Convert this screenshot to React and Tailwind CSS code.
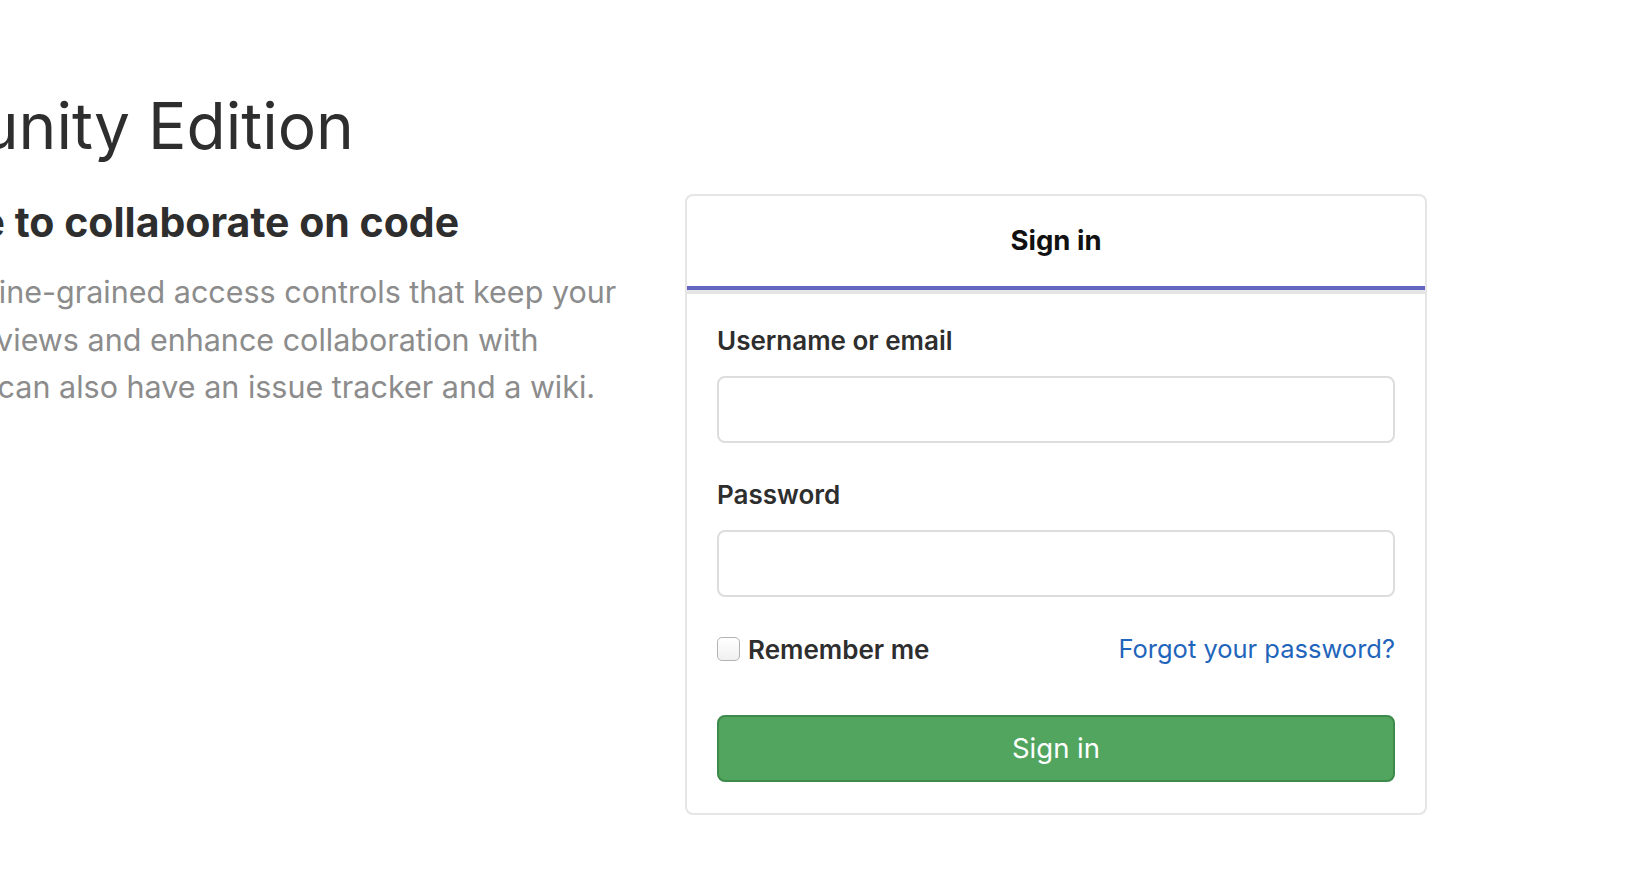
import React from "react";

export default function App() {
  return (
    <div className="w-[1650px] h-[886px] bg-white overflow-hidden flex font-['Inter',sans-serif] text-[#2e2e2e]">
      {/* Left column: intro text, scrolled partly out of view */}
      <div className="w-[685px] shrink-0 overflow-hidden">
        <div className="w-[1100px] pt-[86px]">
          <h1 className="-ml-[430px] text-[64px] leading-[80px] font-normal text-[#2e2e2e] whitespace-nowrap">
            GitLab Community Edition
          </h1>
          <h3 className="-ml-[437px] mt-[32px] text-[41px] leading-[48px] font-bold text-[#2e2e2e] whitespace-nowrap">
            Open source software to collaborate on code
          </h3>
          <p className="-ml-[434px] mt-[22px] text-[30.5px] leading-[47.5px] text-[#8c8c8c] whitespace-nowrap">
            Manage Git repositories with fine-grained access controls that keep your
            <br />
            code secure. Perform code reviews and enhance collaboration with
            <br />
            merge requests. Each project can also have an issue tracker and a wiki.
          </p>
        </div>
      </div>

      {/* Sign-in card */}
      <div className="pt-[194px]">
        <div className="w-[742px] border-2 border-[#e5e5e5] rounded-[8px] bg-white">
          <div className="h-[98px] flex flex-col">
            <div className="flex-1 flex items-center justify-center border-b-4 border-[#6466c2]">
              <span className="text-[27.5px] font-bold text-[#111111]">Sign in</span>
            </div>
            <div className="h-[4px] bg-[#e5e5e5]" />
          </div>
          <form className="px-[30px] pt-[31px] pb-[31px] flex flex-col">
            <label className="text-[26px] leading-[32px] font-semibold text-[#2e2e2e]">
              Username or email
            </label>
            <input
              type="text"
              className="mt-[19px] h-[67px] w-full border-2 border-[#dddddd] rounded-[8px] bg-white outline-none"
            />
            <label className="mt-[36px] text-[26px] leading-[32px] font-semibold text-[#2e2e2e]">
              Password
            </label>
            <input
              type="password"
              className="mt-[19px] h-[67px] w-full border-2 border-[#dddddd] rounded-[8px] bg-white outline-none"
            />
            <div className="mt-[36px] h-[32px] flex items-center justify-between">
              <label className="flex items-center gap-[8px]">
                <span className="w-[23px] h-[24px] rounded-[5px] border-[1.5px] border-[#b3b3b3] bg-gradient-to-b from-white to-[#f0f0f0]" />
                <span className="text-[26px] font-semibold text-[#2e2e2e]">Remember me</span>
              </label>
              <a className="text-[25.5px] text-[#1f65bb]">Forgot your password?</a>
            </div>
            <button
              type="button"
              className="mt-[50px] h-[67px] w-full rounded-[8px] border-2 border-[#3d8a4b] bg-[#51a55f] text-white text-[27.5px]"
            >
              Sign in
            </button>
          </form>
        </div>
      </div>
    </div>
  );
}
